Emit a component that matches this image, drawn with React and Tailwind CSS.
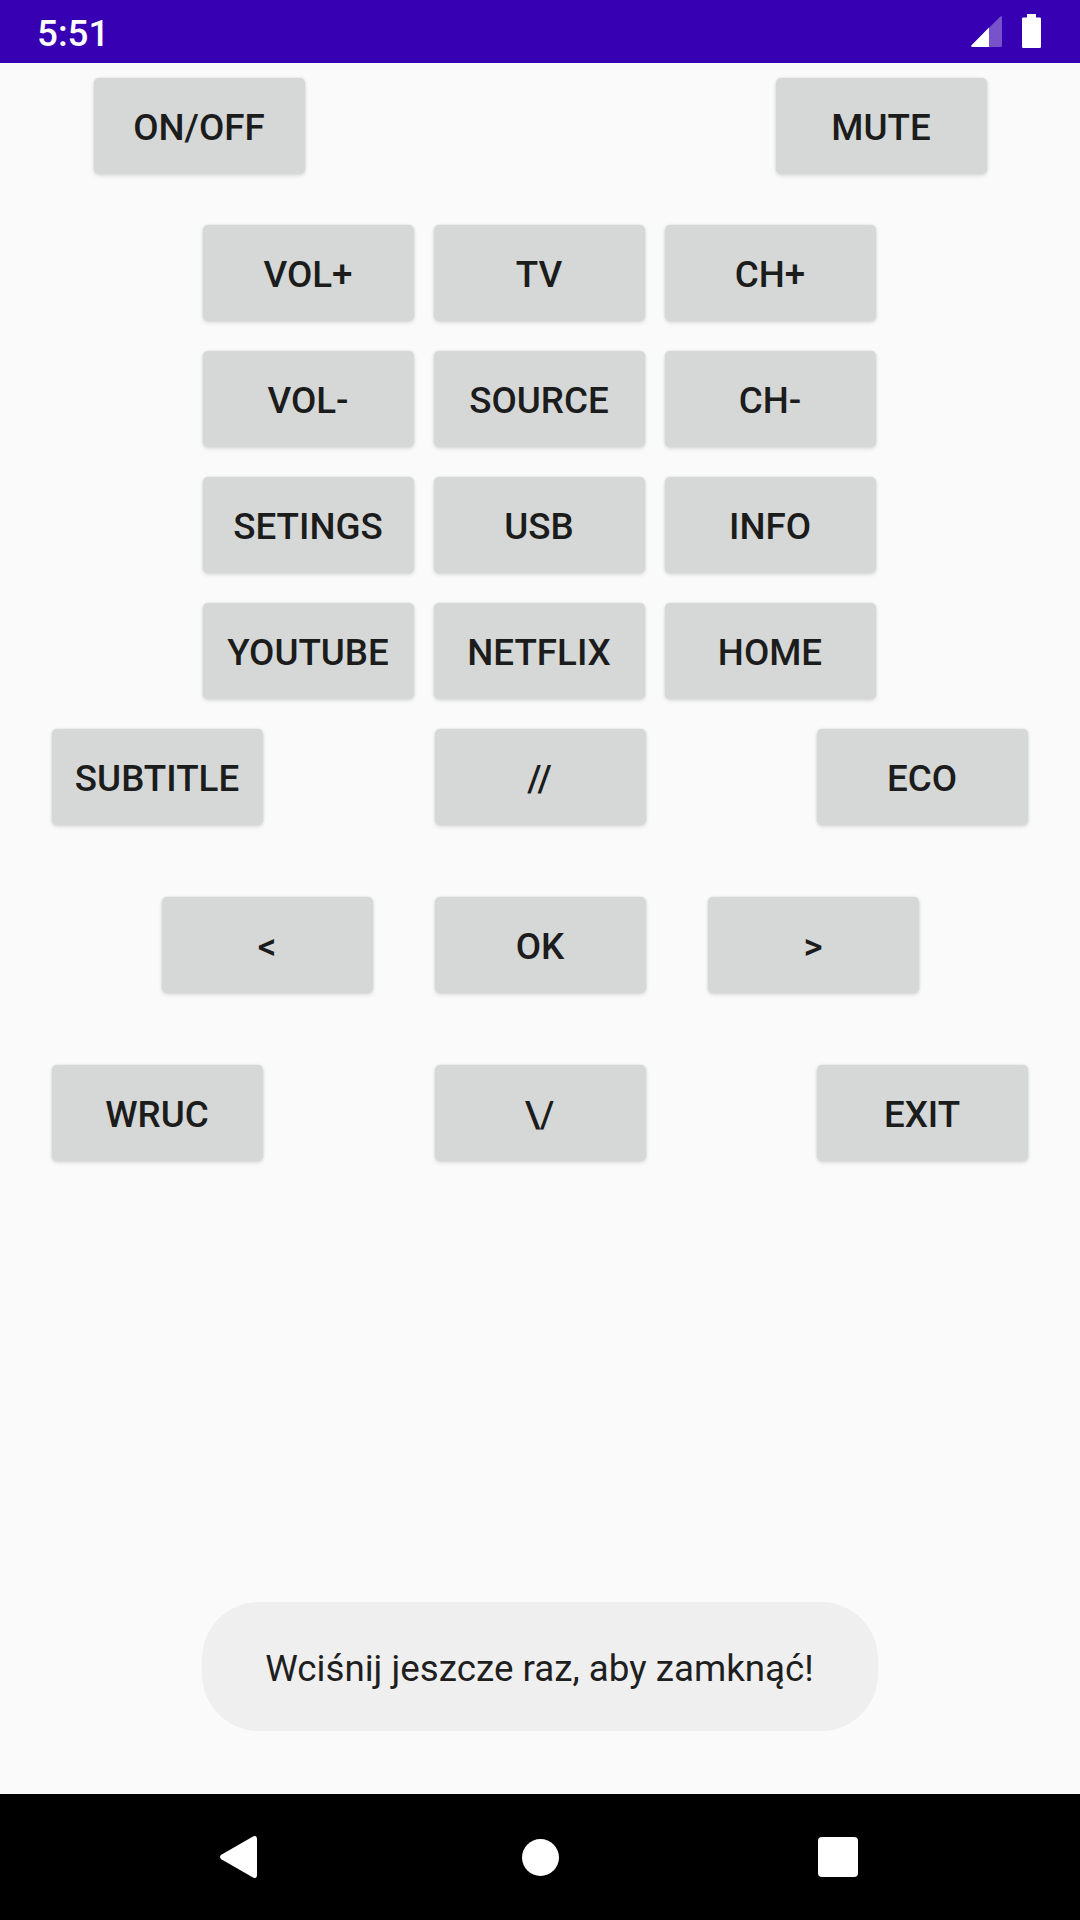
const Key = ({ children }) => (
  <button className="flex h-[96px] w-[211px] shrink-0 items-center justify-center rounded-[5px] bg-[#d6d8d7] pt-[3px] pr-px text-[36.75px] leading-[43px] font-medium whitespace-pre text-[#1b1c1b] shadow-[0_2px_4px_rgba(0,0,0,0.11),0_0_3px_rgba(0,0,0,0.10)]">
    {children}
  </button>
);

const grid = [
  "VOL+", "TV", "CH+",
  "VOL-", "SOURCE", "CH-",
  "SETINGS", "USB", "INFO",
  "YOUTUBE", "NETFLIX", "HOME",
];

function StatusBar() {
  return (
    <header className="flex h-[63px] items-center justify-between bg-[#3700b3] pr-[39px] pl-[37px] text-white">
      <span className="pt-[3px] text-[36.75px] leading-[43px] font-medium">5:51</span>
      <div className="flex h-full items-start pt-[14px]">
        <svg className="mt-[2px] mr-[20px] h-[31px] w-[31px]" viewBox="0 0 31 31">
          <path d="M31 1.300V29.700Q31 31 29.700 31H1.200Q-.6 30.400.6 29.200L28.800 1Q31-.8 31 1.300Z" fill="#fff" fillOpacity=".32" />
          <path d="M18 11.500V31H1.200Q-.6 30.400.6 29.200Z" fill="#fff" />
        </svg>
        <svg className="h-[34px] w-[19px]" viewBox="0 0 19 34">
          <path d="M5 0H14V3.500H17.700Q19 3.500 19 4.800V32.700Q19 34 17.700 34H1.300Q0 34 0 32.700V4.800Q0 3.500 1.300 3.500H5Z" fill="#fff" />
        </svg>
      </div>
    </header>
  );
}

function NavBar() {
  return (
    <nav className="flex h-[126px] items-center bg-black pl-[220px]">
      <svg className="h-[42px] w-[37px]" viewBox="0 0 37 42">
        <path d="M33 .4Q37-1.200 37 3V39Q37 43.200 33 41.600L1.300 23.200Q-1.300 21 1.300 18.800Z" fill="#fff" />
      </svg>
      <span className="ml-[265px] size-[37px] rounded-full bg-white" />
      <span className="ml-[259px] size-[40px] rounded-[4px] bg-white" />
    </nav>
  );
}

export default function App() {
  return (
    <div className="flex h-[1920px] w-[1080px] flex-col overflow-hidden bg-[#fafafa] font-['Roboto',sans-serif]">
      <StatusBar />
      <main className="flex flex-1 flex-col pt-[15px]">
        <div className="flex justify-between pr-[93px] pl-[94px]">
          <Key>ON/OFF</Key>
          <Key>MUTE</Key>
        </div>
        <div className="mt-[51px] grid grid-cols-[repeat(3,211px)] gap-x-[20px] gap-y-[30px] pl-[203px]">
          {grid.map((label) => (
            <Key key={label}>{label}</Key>
          ))}
        </div>
        <div className="mt-[30px] flex justify-between px-[52px]">
          <Key>SUBTITLE</Key>
          <Key>{"//"}</Key>
          <Key>ECO</Key>
        </div>
        <div className="mt-[72px] flex justify-between pr-[161px] pl-[162px]">
          <Key>{"<"}</Key>
          <Key>OK</Key>
          <Key>{">"}</Key>
        </div>
        <div className="mt-[72px] flex justify-between px-[52px]">
          <Key>WRUC</Key>
          <Key>{"\\/"}</Key>
          <Key>EXIT</Key>
        </div>
        <div className="mx-auto mt-auto mb-[63px] flex h-[129px] w-[676px] items-center justify-center rounded-[57px] bg-[#efefef] pt-[4px] pr-px text-[36.75px] leading-[43px] whitespace-nowrap text-[#1f1f1f]">
          Wciśnij jeszcze raz, aby zamknąć!
        </div>
      </main>
      <NavBar />
    </div>
  );
}
